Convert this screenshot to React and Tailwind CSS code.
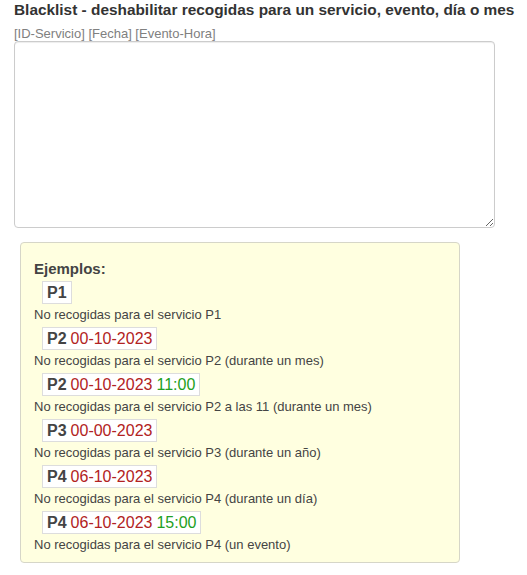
const examples = [
  { id: 'P1', desc: 'No recogidas para el servicio P1' },
  { id: 'P2', date: '00-10-2023', desc: 'No recogidas para el servicio P2 (durante un mes)' },
  { id: 'P2', date: '00-10-2023', time: '11:00', desc: 'No recogidas para el servicio P2 a las 11 (durante un mes)' },
  { id: 'P3', date: '00-00-2023', desc: 'No recogidas para el servicio P3 (durante un año)' },
  { id: 'P4', date: '06-10-2023', desc: 'No recogidas para el servicio P4 (durante un día)' },
  { id: 'P4', date: '06-10-2023', time: '15:00', desc: 'No recogidas para el servicio P4 (un evento)' },
]

export default function App() {
  return (
    <div className="min-h-[575px] bg-white px-[14px] pt-0 font-['Liberation_Sans',Arial,sans-serif] text-[#333]">
      <h3 className="whitespace-nowrap text-[15.4px] font-bold leading-[20px] text-[#333]">
        Blacklist - deshabilitar recogidas para un servicio, evento, día o mes
      </h3>
      <div className="mt-[7px] text-[13px] leading-[14px] text-[#808080]">[ID-Servicio] [Fecha] [Evento-Hora]</div>
      <textarea className="block h-[187px] w-[481px] resize-y rounded-[4px] border border-[#ccc] bg-white shadow-[inset_0_1px_1px_rgba(0,0,0,0.075)] outline-none" />
      <div className="ml-[6px] mt-[14px] w-[440px] rounded-[4px] border border-[#d6d6c8] bg-[#ffffe0] px-[13px] pb-[9px] pt-[17px]">
        <div className="mb-[4px] text-[15px] font-bold leading-[17px] text-[#444]">Ejemplos:</div>
        <div className="flex flex-col">
          {examples.map((ex, i) => (
            <div key={i} className="mt-[4px] flex flex-col items-start first:mt-0">
              <div className="ml-[8px] flex h-[23px] items-center gap-[4px] border border-[#ddd] bg-white px-[4px] text-[16px] leading-[18px]">
                <span className="font-bold text-[#444]">{ex.id}</span>
                {ex.date && <span className="text-[#b22222]">{ex.date}</span>}
                {ex.time && <span className="text-[#22a022]">{ex.time}</span>}
              </div>
              <div className="mt-[2px] text-[13px] leading-[17px] text-[#444]">{ex.desc}</div>
            </div>
          ))}
        </div>
      </div>
    </div>
  )
}
